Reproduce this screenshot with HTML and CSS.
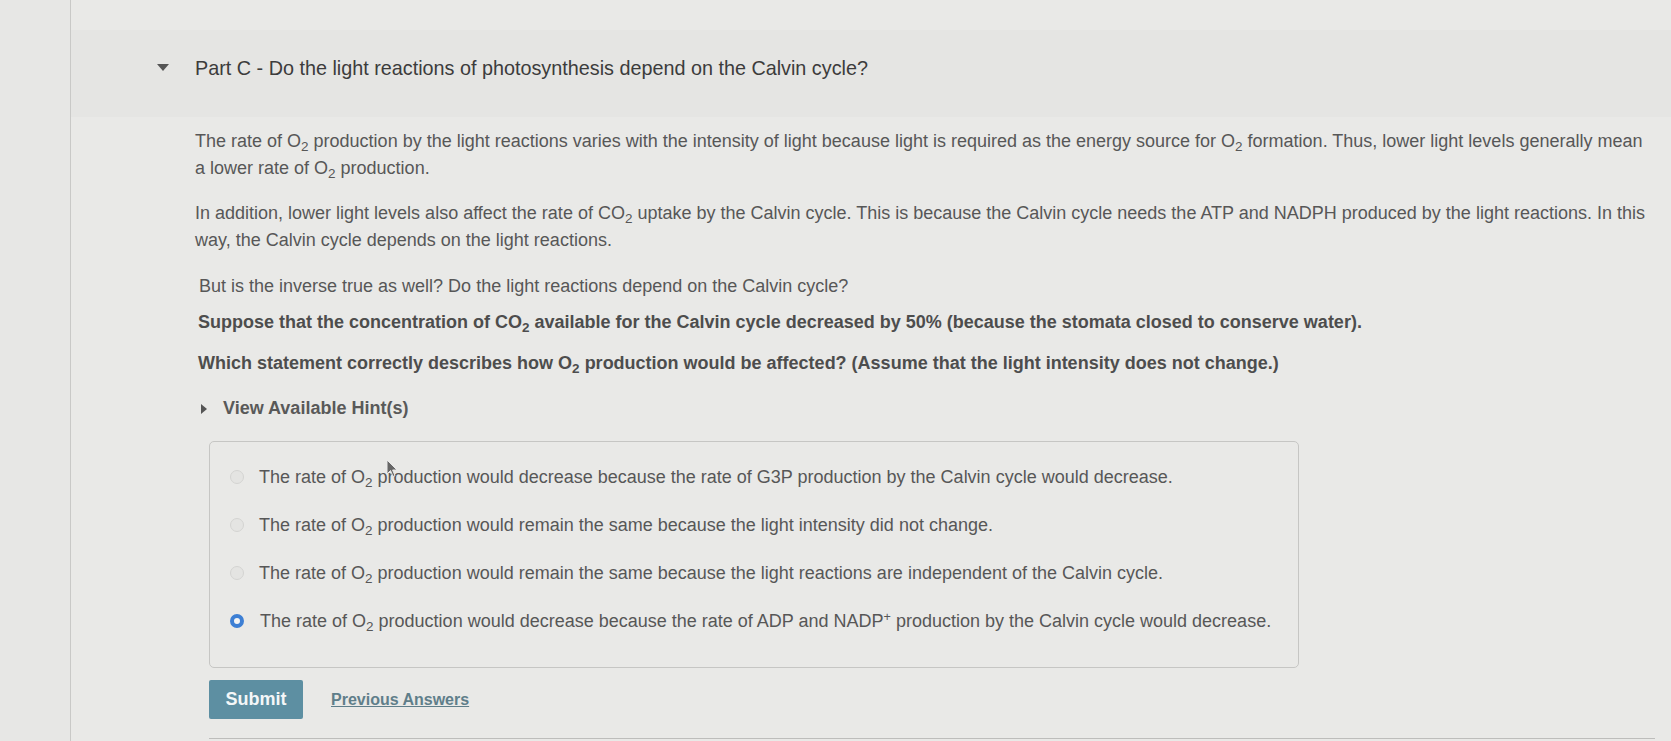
FILE: index.html
```html
<!DOCTYPE html>
<html lang="en">
<head>
<meta charset="utf-8">
<title>Part C</title>
<link rel="stylesheet" href="styles.css">
</head>
<body>
<div class="page">
  <div class="gutter"></div>
  <main class="main">
    <div class="part-header">
      <span class="caret-down"></span>
      <h2 class="part-title">Part C - Do the light reactions of photosynthesis depend on the Calvin cycle?</h2>
    </div>
    <div class="content">
      <p class="p1">The rate of O<sub>2</sub> production by the light reactions varies with the intensity of light because light is required as the energy source for O<sub>2</sub> formation. Thus, lower light levels generally mean a lower rate of O<sub>2</sub> production.</p>
      <p class="p2">In addition, lower light levels also affect the rate of CO<sub>2</sub> uptake by the Calvin cycle. This is because the Calvin cycle needs the ATP and NADPH produced by the light reactions. In this way, the Calvin cycle depends on the light reactions.</p>
      <p class="p3">But is the inverse true as well? Do the light reactions depend on the Calvin cycle?</p>
      <p class="p4 strong">Suppose that the concentration of CO<sub>2</sub> available for the Calvin cycle decreased by 50% (because the stomata closed to conserve water).</p>
      <p class="p5 strong">Which statement correctly describes how O<sub>2</sub> production would be affected? (Assume that the light intensity does not change.)</p>
      <div class="hint"><span class="caret-right"></span><span class="hint-text">View Available Hint(s)</span></div>
      <div class="answers">
        <label class="option"><span class="radio"></span><span>The rate of O<sub>2</sub> production would decrease because the rate of G3P production by the Calvin cycle would decrease.</span></label>
        <label class="option"><span class="radio"></span><span>The rate of O<sub>2</sub> production would remain the same because the light intensity did not change.</span></label>
        <label class="option"><span class="radio"></span><span>The rate of O<sub>2</sub> production would remain the same because the light reactions are independent of the Calvin cycle.</span></label>
        <label class="option"><span class="radio checked"></span><span>The rate of O<sub>2</sub> production would decrease because the rate of ADP and NADP<sup>+</sup> production by the Calvin cycle would decrease.</span></label>
        <svg class="pointer" width="12" height="19" viewBox="0 0 12 19"><path d="M1 1 L1 15 L4.5 11.5 L7 17.5 L9 16.6 L6.6 11 L11 11 Z" fill="#666" stroke="#e8e8e8" stroke-width="1"/></svg>
      </div>
      <div class="actions">
        <button class="submit" type="button">Submit</button>
        <a class="prev" href="#">Previous Answers</a>
      </div>
      <div class="next-box"></div>
    </div>
  </main>
</div>
</body>
</html>
```

FILE: styles.css
```css
html, body {
  margin: 0;
  padding: 0;
}
body {
  background: #e9e9e7;
  font-family: "Liberation Sans", Arial, Helvetica, sans-serif;
  color: #575757;
  width: 1671px;
  height: 741px;
  overflow: hidden;
}
.page {
  display: flex;
  height: 741px;
}
.gutter {
  width: 70px;
  flex: none;
  border-right: 1px solid #c9c9c7;
  background: #e7e7e5;
}
.main {
  flex: 1;
  min-width: 0;
}
.part-header {
  margin-top: 30px;
  height: 87px;
  box-sizing: border-box;
  padding-top: 24px;
  padding-left: 86px;
  display: flex;
  align-items: flex-start;
  background: #e5e5e3;
}
.caret-down {
  width: 0;
  height: 0;
  border-left: 6px solid transparent;
  border-right: 6px solid transparent;
  border-top: 7px solid #555;
  margin-top: 10px;
  margin-right: 26px;
}
.part-title {
  margin: 0;
  font-size: 19.8px;
  line-height: 28px;
  font-weight: normal;
  color: #3c3c3c;
}
.content {
  padding-left: 124px;
  padding-right: 16px;
  font-size: 18px;
  line-height: 27px;
}
.content p {
  margin: 0;
}
sub {
  font-size: 0.75em;
  line-height: 1;
  vertical-align: -0.3em;
}
sup {
  font-size: 0.7em;
  line-height: 1;
  vertical-align: 0.45em;
}
.content .p1 { margin-top: 11px; }
.content .p2 { margin-top: 18px; }
.content .p3 { margin-top: 19px; padding-left: 4px; }
.content .p4 { margin-top: 9px; padding-left: 3px; }
.content .p5 { margin-top: 14px; padding-left: 3px; }
.strong {
  font-weight: bold;
  color: #4d4d4d;
}
.hint {
  margin-top: 18px;
  display: flex;
  align-items: center;
  padding-left: 6px;
  font-weight: bold;
  color: #595959;
}
.caret-right {
  width: 0;
  height: 0;
  border-top: 5px solid transparent;
  border-bottom: 5px solid transparent;
  border-left: 6px solid #555;
  margin-right: 16px;
}
.answers {
  position: relative;
  margin-top: 19px;
  margin-left: 14px;
  width: 1090px;
  box-sizing: border-box;
  border: 1px solid #c6c6c4;
  border-radius: 5px;
  padding: 22px 0 33px 20px;
  display: flex;
  flex-direction: column;
  gap: 22px;
  font-size: 18px;
}
.option {
  display: flex;
  align-items: center;
  line-height: 26px;
  color: #575757;
}
.radio {
  flex: none;
  width: 12px;
  height: 12px;
  border-radius: 50%;
  border: 1px solid #d4d4d2;
  background: #e4e4e2;
  margin-right: 15px;
}
.radio.checked {
  width: 6px;
  height: 6px;
  border: 4px solid #3d7fd4;
  background: #f4f4f4;
  margin-right: 16px;
}
.pointer {
  position: absolute;
  left: 176px;
  top: 17px;
}
.actions {
  margin-top: 12px;
  margin-left: 14px;
  display: flex;
  align-items: center;
  gap: 28px;
}
.submit {
  width: 94px;
  height: 39px;
  border: none;
  border-radius: 2px;
  background: #5d8fa2;
  color: #f4f7f8;
  font-family: "Liberation Sans", Arial, sans-serif;
  font-size: 18px;
  font-weight: bold;
  padding: 0;
}
.prev {
  color: #5f7e8a;
  font-weight: bold;
  font-size: 16px;
  text-decoration: underline;
}
.next-box {
  margin-top: 19px;
  margin-left: 14px;
  border-top: 1px solid #bdbdbb;
  height: 10px;
}
```
